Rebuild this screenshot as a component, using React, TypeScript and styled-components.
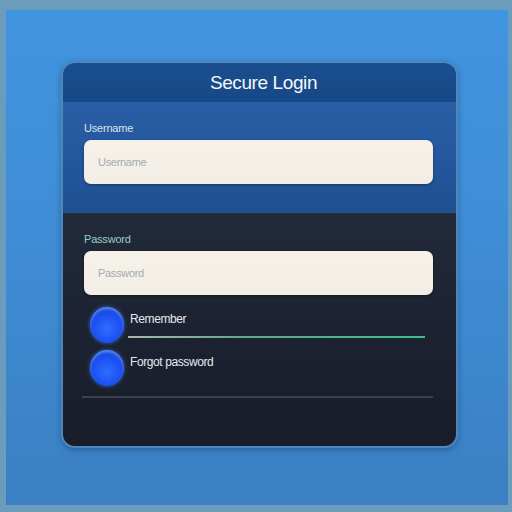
import styled, { createGlobalStyle } from 'styled-components';

const GlobalStyle = createGlobalStyle`
  html, body {
    margin: 0;
    padding: 0;
    width: 512px;
    height: 512px;
    overflow: hidden;
    font-family: 'Liberation Sans', Arial, sans-serif;
  }
`;

const Frame = styled.div`
  width: 512px;
  height: 512px;
  box-sizing: border-box;
  background: #6b9cbb;
  padding: 10px 4px 7px 6px;
`;

const Backdrop = styled.div`
  height: 100%;
  box-sizing: border-box;
  background: linear-gradient(180deg, #4194de 0%, #3f8dd6 45%, #3a80c2 100%);
  padding: 51px 50px 57px 55px;
`;

const Card = styled.div`
  height: 100%;
  box-sizing: border-box;
  border-radius: 14px;
  border: 2px solid #4d86bb;
  overflow: hidden;
  display: flex;
  flex-direction: column;
  box-shadow: 0 2px 6px rgba(10, 40, 80, 0.35);
`;

const Header = styled.div`
  height: 39px;
  flex: none;
  display: flex;
  align-items: center;
  justify-content: center;
  padding-left: 8px;
  background: linear-gradient(180deg, #1a4e8f 0%, #174887 100%);
  color: #f4f7fb;
  font-size: 19px;
  letter-spacing: -0.4px;
`;

const Section = styled.div<{ $dark?: boolean }>`
  flex: ${(p) => (p.$dark ? 1 : 'none')};
  height: ${(p) => (p.$dark ? 'auto' : '110px')};
  box-sizing: border-box;
  padding: 20px 23px 0 21px;
  background: ${(p) =>
    p.$dark
      ? 'linear-gradient(180deg, #222a3a 0%, #1c2231 50%, #191d29 100%)'
      : 'linear-gradient(180deg, #2a5fa5 0%, #24579d 50%, #1e4f92 100%)'};
  border-top: ${(p) => (p.$dark ? '1px solid #2d4f7a' : 'none')};
`;

const Label = styled.div<{ $accent?: boolean }>`
  font-size: 11px;
  color: ${(p) => (p.$accent ? '#93d0c8' : '#dbe4f0')};
  margin-bottom: 6px;
  letter-spacing: -0.2px;
`;

const Input = styled.div`
  height: 44px;
  border-radius: 7px;
  background: linear-gradient(180deg, #f6f2ea 0%, #f2eee5 100%);
  box-shadow: 0 1px 3px rgba(0, 0, 0, 0.35);
  display: flex;
  align-items: center;
  padding-left: 14px;
  font-size: 11px;
  color: #a5aab0;
  letter-spacing: -0.3px;
`;

const Options = styled.div`
  display: flex;
  flex-direction: column;
  gap: 7px;
  margin-top: 12px;
`;

const Option = styled.div`
  display: flex;
  align-items: flex-start;
  gap: 6px;
  margin-left: 6px;
  position: relative;
`;

const Dot = styled.div`
  width: 34px;
  height: 36px;
  border-radius: 50%;
  flex: none;
  background: radial-gradient(circle at 50% 60%, #2f6dff 0%, #1a4ef0 55%, #123bc0 100%);
  box-shadow: 0 0 4px rgba(60, 130, 255, 0.7), inset 0 2px 3px rgba(150, 190, 255, 0.6);
`;

const OptionText = styled.div`
  color: #e6e9ee;
  font-size: 12px;
  margin-top: 5px;
  letter-spacing: -0.4px;
`;

const Track = styled.div`
  position: absolute;
  left: 38px;
  right: 8px;
  top: 29px;
  height: 2px;
  background: linear-gradient(90deg, #a8b8b0 0%, #5fa88a 40%, #3fbf8a 100%);
`;

const Divider = styled.div`
  height: 2px;
  background: #3b4150;
  margin: 10px 0 0 -2px;
`;

export default function App() {
  return (
    <>
      <GlobalStyle />
      <Frame>
        <Backdrop>
          <Card>
            <Header>Secure Login</Header>
            <Section>
              <Label>Username</Label>
              <Input>Username</Input>
            </Section>
            <Section $dark>
              <Label $accent>Password</Label>
              <Input>Password</Input>
              <Options>
                <Option>
                  <Dot />
                  <OptionText>Remember</OptionText>
                  <Track />
                </Option>
                <Option>
                  <Dot />
                  <OptionText>Forgot password</OptionText>
                </Option>
              </Options>
              <Divider />
            </Section>
          </Card>
        </Backdrop>
      </Frame>
    </>
  );
}
